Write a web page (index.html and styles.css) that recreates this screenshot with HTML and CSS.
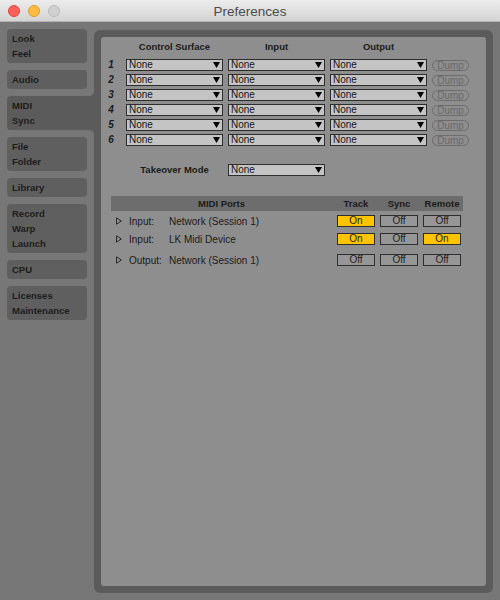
FILE: index.html
```html
<!DOCTYPE html>
<html>
<head>
<meta charset="utf-8">
<title>Preferences</title>
<link rel="stylesheet" href="styles.css">
</head>
<body>
<div class="window">
  <header class="titlebar">
    <div class="lights">
      <span class="light red"></span>
      <span class="light yellow"></span>
      <span class="light gray"></span>
    </div>
    <div class="title">Preferences</div>
    <div></div>
  </header>
  <div class="content">
    <nav class="sidebar">
      <div class="tab"><span>Look</span><span>Feel</span></div>
      <div class="tab"><span>Audio</span></div>
      <div class="tab selected"><span>MIDI</span><span>Sync</span></div>
      <div class="tab"><span>File</span><span>Folder</span></div>
      <div class="tab"><span>Library</span></div>
      <div class="tab"><span>Record</span><span>Warp</span><span>Launch</span></div>
      <div class="tab"><span>CPU</span></div>
      <div class="tab"><span>Licenses</span><span>Maintenance</span></div>
    </nav>
    <main class="panel">
      <div class="inner">
        <div class="surface-grid heads">
          <span></span>
          <span class="head">Control Surface</span>
          <span class="head">Input</span>
          <span class="head">Output</span>
          <span></span>
        </div>
        <div class="surface-grid rows">
          <span class="num">1</span>
          <div class="select"><span>None</span><svg width="7" height="6" viewBox="0 0 7 6"><path d="M0 0H7L3.5 6Z" fill="#000"/></svg></div>
          <div class="select"><span>None</span><svg width="7" height="6" viewBox="0 0 7 6"><path d="M0 0H7L3.5 6Z" fill="#000"/></svg></div>
          <div class="select"><span>None</span><svg width="7" height="6" viewBox="0 0 7 6"><path d="M0 0H7L3.5 6Z" fill="#000"/></svg></div>
          <span class="dump">Dump</span>

          <span class="num">2</span>
          <div class="select"><span>None</span><svg width="7" height="6" viewBox="0 0 7 6"><path d="M0 0H7L3.5 6Z" fill="#000"/></svg></div>
          <div class="select"><span>None</span><svg width="7" height="6" viewBox="0 0 7 6"><path d="M0 0H7L3.5 6Z" fill="#000"/></svg></div>
          <div class="select"><span>None</span><svg width="7" height="6" viewBox="0 0 7 6"><path d="M0 0H7L3.5 6Z" fill="#000"/></svg></div>
          <span class="dump">Dump</span>

          <span class="num">3</span>
          <div class="select"><span>None</span><svg width="7" height="6" viewBox="0 0 7 6"><path d="M0 0H7L3.5 6Z" fill="#000"/></svg></div>
          <div class="select"><span>None</span><svg width="7" height="6" viewBox="0 0 7 6"><path d="M0 0H7L3.5 6Z" fill="#000"/></svg></div>
          <div class="select"><span>None</span><svg width="7" height="6" viewBox="0 0 7 6"><path d="M0 0H7L3.5 6Z" fill="#000"/></svg></div>
          <span class="dump">Dump</span>

          <span class="num">4</span>
          <div class="select"><span>None</span><svg width="7" height="6" viewBox="0 0 7 6"><path d="M0 0H7L3.5 6Z" fill="#000"/></svg></div>
          <div class="select"><span>None</span><svg width="7" height="6" viewBox="0 0 7 6"><path d="M0 0H7L3.5 6Z" fill="#000"/></svg></div>
          <div class="select"><span>None</span><svg width="7" height="6" viewBox="0 0 7 6"><path d="M0 0H7L3.5 6Z" fill="#000"/></svg></div>
          <span class="dump">Dump</span>

          <span class="num">5</span>
          <div class="select"><span>None</span><svg width="7" height="6" viewBox="0 0 7 6"><path d="M0 0H7L3.5 6Z" fill="#000"/></svg></div>
          <div class="select"><span>None</span><svg width="7" height="6" viewBox="0 0 7 6"><path d="M0 0H7L3.5 6Z" fill="#000"/></svg></div>
          <div class="select"><span>None</span><svg width="7" height="6" viewBox="0 0 7 6"><path d="M0 0H7L3.5 6Z" fill="#000"/></svg></div>
          <span class="dump">Dump</span>

          <span class="num">6</span>
          <div class="select"><span>None</span><svg width="7" height="6" viewBox="0 0 7 6"><path d="M0 0H7L3.5 6Z" fill="#000"/></svg></div>
          <div class="select"><span>None</span><svg width="7" height="6" viewBox="0 0 7 6"><path d="M0 0H7L3.5 6Z" fill="#000"/></svg></div>
          <div class="select"><span>None</span><svg width="7" height="6" viewBox="0 0 7 6"><path d="M0 0H7L3.5 6Z" fill="#000"/></svg></div>
          <span class="dump">Dump</span>
        </div>

        <div class="surface-grid takeover">
          <span></span>
          <span class="head">Takeover Mode</span>
          <div class="select"><span>None</span><svg width="7" height="6" viewBox="0 0 7 6"><path d="M0 0H7L3.5 6Z" fill="#000"/></svg></div>
        </div>

        <section class="ports">
          <div class="ports-grid ports-head">
            <span>MIDI Ports</span>
            <span>Track</span>
            <span>Sync</span>
            <span>Remote</span>
          </div>
          <div class="ports-grid port-row">
            <div class="port-name">
              <svg class="tri" width="6" height="8" viewBox="0 0 6 8"><path d="M0.5 0.8V7.2L5.3 4Z" fill="none" stroke="#2a2a2a" stroke-width="1"/></svg>
              <span>Input:</span>
              <span>Network (Session 1)</span>
            </div>
            <span class="btn on">On</span>
            <span class="btn">Off</span>
            <span class="btn">Off</span>
          </div>
          <div class="ports-grid port-row">
            <div class="port-name">
              <svg class="tri" width="6" height="8" viewBox="0 0 6 8"><path d="M0.5 0.8V7.2L5.3 4Z" fill="none" stroke="#2a2a2a" stroke-width="1"/></svg>
              <span>Input:</span>
              <span>LK Midi Device</span>
            </div>
            <span class="btn on">On</span>
            <span class="btn">Off</span>
            <span class="btn on">On</span>
          </div>
          <div class="ports-grid port-row output">
            <div class="port-name">
              <svg class="tri" width="6" height="8" viewBox="0 0 6 8"><path d="M0.5 0.8V7.2L5.3 4Z" fill="none" stroke="#2a2a2a" stroke-width="1"/></svg>
              <span>Output:</span>
              <span>Network (Session 1)</span>
            </div>
            <span class="btn">Off</span>
            <span class="btn">Off</span>
            <span class="btn">Off</span>
          </div>
        </section>
      </div>
    </main>
  </div>
</div>
</body>
</html>
```

FILE: styles.css
```css
html, body {
  margin: 0;
  padding: 0;
}

body {
  width: 500px;
  height: 600px;
  overflow: hidden;
  font-family: "Liberation Sans", Arial, sans-serif;
  color: #1b1b1b;
}

.window {
  width: 500px;
  height: 600px;
  display: flex;
  flex-direction: column;
  background: #777777;
}

/* Title bar */
.titlebar {
  height: 22px;
  flex: none;
  box-sizing: border-box;
  display: grid;
  grid-template-columns: 1fr auto 1fr;
  align-items: center;
  background: linear-gradient(#ececec, #d4d4d4);
  border-bottom: 1px solid #b3b3b3;
}

.lights {
  display: flex;
  gap: 8px;
  padding-left: 8px;
  padding-top: 1px;
}

.light {
  width: 12px;
  height: 12px;
  box-sizing: border-box;
  border-radius: 50%;
}

.light.red {
  background: #fc605b;
  border: 1px solid #de4640;
}

.light.yellow {
  background: #fdbc40;
  border: 1px solid #dd9d2f;
}

.light.gray {
  background: #d0d0d0;
  border: 1px solid #b9b9b9;
}

.title {
  font-size: 13.5px;
  color: #4b4b4b;
  padding-top: 1px;
}

/* Main area */
.content {
  flex: 1;
  display: flex;
  min-height: 0;
}

.sidebar {
  width: 94px;
  flex: none;
  box-sizing: border-box;
  padding: 7px 0 0 7px;
  display: flex;
  flex-direction: column;
  align-items: flex-start;
  gap: 7px;
}

.tab {
  width: 80px;
  box-sizing: border-box;
  padding: 2px 5px;
  display: flex;
  flex-direction: column;
  background: #5f5f5f;
  border-radius: 4px;
  font-size: 9.5px;
  font-weight: bold;
  line-height: 15px;
  color: #1c1c1c;
}

.tab.selected {
  width: 87px;
  background: #5b5b5b;
  border-radius: 4px 0 0 4px;
  position: relative;
}

.tab.selected::before,
.tab.selected::after {
  content: "";
  position: absolute;
  right: 0;
  width: 5px;
  height: 5px;
}

.tab.selected::before {
  top: -5px;
  background: radial-gradient(circle at 0 0, transparent 4.5px, #5b5b5b 5.5px);
}

.tab.selected::after {
  top: 100%;
  background: radial-gradient(circle at 0 100%, transparent 4.5px, #5b5b5b 5.5px);
}

.panel {
  flex: 1;
  margin: 8px 7px 7px 0;
  border: 7px solid #5b5b5b;
  border-radius: 6px;
  background: #5b5b5b;
  display: flex;
}

.inner {
  flex: 1;
  background: #8e8e8e;
  border-radius: 3px;
  padding-top: 4px;
}

/* Control surface grid */
.surface-grid {
  display: grid;
  grid-template-columns: 20px 97px 97px 97px 37px;
  column-gap: 5px;
  align-items: center;
}

.heads {
  height: 12px;
  margin-bottom: 6px;
}

.head {
  text-align: center;
  font-size: 9.5px;
  font-weight: bold;
  line-height: 12px;
  color: #1b1b1b;
}

.rows {
  row-gap: 3px;
}

.num {
  text-align: center;
  font-size: 10px;
  font-weight: bold;
  font-style: italic;
  line-height: 12px;
  color: #1b1b1b;
}

.select {
  height: 12px;
  box-sizing: border-box;
  border: 1px solid #2d2d2d;
  background: #c4c4c4;
  display: flex;
  align-items: center;
  justify-content: space-between;
  padding: 0 2px 0 2px;
  font-size: 10px;
  line-height: 10px;
  color: #151515;
}

.select svg {
  display: block;
}

.dump {
  height: 11px;
  box-sizing: border-box;
  border: 1px solid #6c6c6c;
  border-radius: 6px;
  font-size: 10px;
  line-height: 9px;
  text-align: center;
  color: #6a6a6a;
}

.takeover {
  margin-top: 18px;
}

/* MIDI ports */
.ports {
  margin: 20px 0 0 10px;
  width: 352px;
}

.ports-grid {
  display: grid;
  grid-template-columns: 1fr 38px 38px 38px;
  column-gap: 5px;
  padding-right: 2px;
  align-items: center;
}

.ports-head {
  height: 15px;
  background: #6d6d6d;
  font-size: 9.5px;
  font-weight: bold;
  line-height: 15px;
  text-align: center;
  color: #1b1b1b;
}

.port-row {
  height: 18px;
  font-size: 10px;
  color: #1b1b1b;
}

.port-row:first-of-type {
  margin-top: 0;
}

.ports-head + .port-row {
  margin-top: 1px;
}

.port-row.output {
  margin-top: 3px;
}

.port-name {
  display: grid;
  grid-template-columns: 18px 40px 1fr;
  align-items: center;
  white-space: nowrap;
}

.tri {
  display: block;
  margin-left: 5px;
}

.btn {
  height: 12px;
  box-sizing: border-box;
  border: 1px solid #2e2e2e;
  background: #969696;
  font-size: 10px;
  line-height: 10px;
  text-align: center;
  color: #1e1e1e;
}

.btn.on {
  background: #ffc400;
}
```
